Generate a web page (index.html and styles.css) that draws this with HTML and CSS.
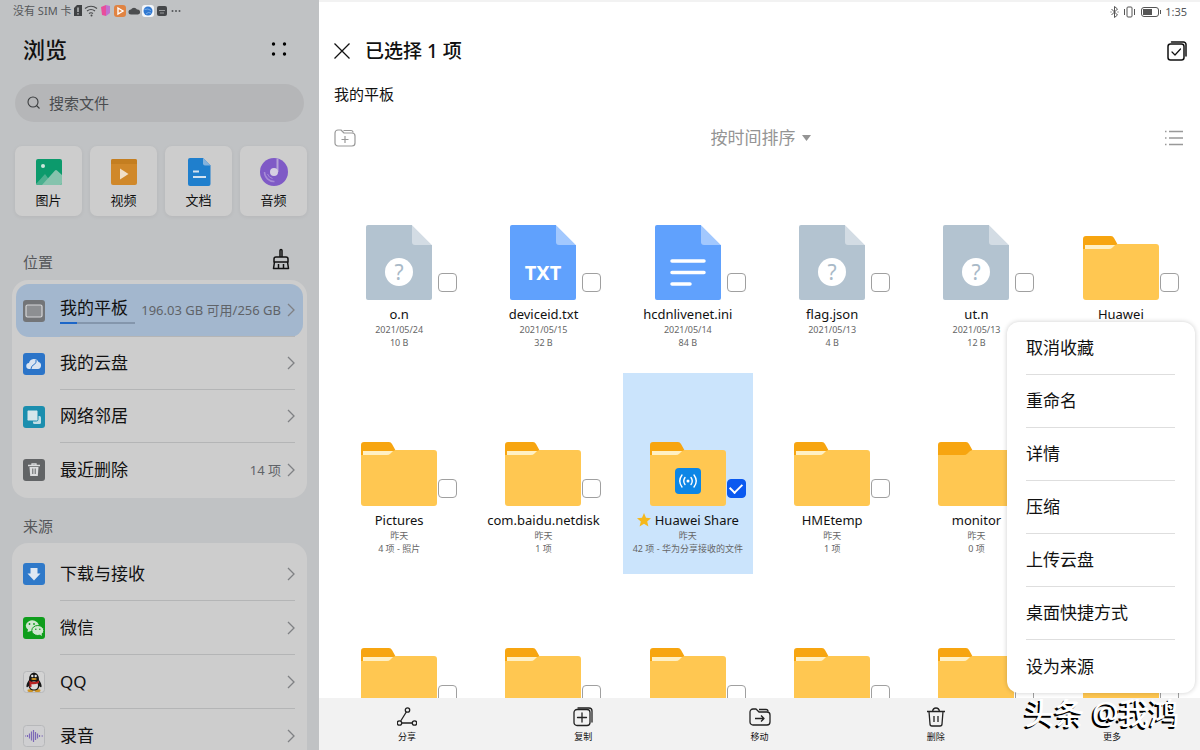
FILE: index.html
```html
<!DOCTYPE html>
<html lang="zh-CN">
<head>
  <meta charset="UTF-8">
  <meta name="viewport" content="width=device-width, initial-scale=1.0">
  <title>文件管理</title>
  <link rel="stylesheet" href="styles.css">
</head>
<body>

<!-- shared icons -->
<svg class="defs" width="0" height="0" aria-hidden="true">
  <symbol id="chevron" viewBox="0 0 8 14">
    <path d="M1 1l6 6-6 6" fill="none" stroke="#7f8184" stroke-width="1.3"/>
  </symbol>
  <symbol id="doc" viewBox="0 0 66 75">
    <path d="M2 0H46L66 20V73a2 2 0 0 1-2 2H2a2 2 0 0 1-2-2V2a2 2 0 0 1 2-2z" fill="currentColor"/>
    <path d="M46 0L66 20H49a3 3 0 0 1-3-3z" fill="#fff" fill-opacity=".42"/>
    <path d="M46 0H66V20z" fill="#fff"/>
  </symbol>
  <symbol id="folder" viewBox="0 0 76 64">
    <path d="M0 3a3 3 0 0 1 3-3H28q2 0 3 2l5 9v8H0z" fill="#f7a510"/>
    <path d="M2 9H34V16H2z" fill="#fff0c4"/>
    <path d="M0 13H26q2 0 3.500-1.500l2-2Q33 8 35 8H73a3 3 0 0 1 3 3V61a3 3 0 0 1-3 3H3a3 3 0 0 1-3-3z" fill="#ffc751"/>
  </symbol>
  <symbol id="folder-empty" viewBox="0 0 76 64">
    <path d="M0 3a3 3 0 0 1 3-3H28q2 0 3 2l5 9v8H0z" fill="#f7a510"/>
    <path d="M0 13H26q2 0 3.500-1.500l2-2Q33 8 35 8H73a3 3 0 0 1 3 3V61a3 3 0 0 1-3 3H3a3 3 0 0 1-3-3z" fill="#ffc751"/>
  </symbol>
</svg>

<div class="app">
  <aside class="sidebar">
    <div class="status">
      <span>没有 SIM 卡</span>
      <svg width="109" height="14" viewBox="0 0 109 14">
        <path d="M1 4L4 1H9V12H1z" fill="#3f4143"/>
        <path d="M5 3.500V8M5 9.300V10.600" stroke="#c0c2c4" stroke-width="1.400"/>
        <g fill="none" stroke="#494b4d" stroke-width="1.200">
          <path d="M12 4.500Q18 0 24 4.500M14 7Q18 4 22 7M16 9.500Q18 8 20 9.500"/>
        </g>
        <circle cx="18.500" cy="11.500" r="1" fill="#494b4d"/>
        <path d="M28 3L33 1V12L29 11z" fill="#e84d9c"/>
        <path d="M33 1L37 2V9L33 12z" fill="#c070d0"/>
        <rect x="41" y="1" width="12" height="12" rx="3" fill="#e08342"/>
        <path d="M45 4L50 7L45 10z" fill="none" stroke="#fff" stroke-width="1.400"/>
        <path d="M58 10.500a2.500 2.500 0 0 1 0-5 3.500 3.500 0 0 1 6 0 2.500 2.500 0 0 1 1 5z" fill="#4b4d4f"/>
        <rect x="69" y="1" width="12" height="12" rx="3" fill="#f3f6fa"/>
        <circle cx="75" cy="7" r="4.500" fill="#2f78d2"/>
        <path d="M71.500 5.500Q75 4 78 6.500M73 10Q75 7.500 78 9" fill="none" stroke="#8cb9ea" stroke-width=".8"/>
        <rect x="84" y="2" width="10" height="10" rx="2" fill="#45474a"/>
        <path d="M86 6.500H92M87 9H91" stroke="#9a9c9e"/>
        <g fill="#55575a">
          <circle cx="99.500" cy="7" r="1"/><circle cx="103" cy="7" r="1"/><circle cx="106.500" cy="7" r="1"/>
        </g>
      </svg>
    </div>

    <header class="side-head">
      <h1>浏览</h1>
      <button class="icon-btn" aria-label="更多">
        <svg width="16" height="16" viewBox="0 0 16 16">
          <circle cx="2.500" cy="3" r="1.700"/><circle cx="13.500" cy="3" r="1.700"/>
          <circle cx="2.500" cy="13" r="1.700"/><circle cx="13.500" cy="13" r="1.700"/>
        </svg>
      </button>
    </header>

    <label class="search">
      <svg width="14" height="14" viewBox="0 0 14 14" fill="none" stroke="#3c3e40" stroke-width="1.100">
        <circle cx="6" cy="6" r="5"/><path d="M9.500 9.500L12.500 12.500"/>
      </svg>
      <input type="search" placeholder="搜索文件" aria-label="搜索文件">
    </label>

    <nav class="tiles">
      <a class="tile" href="#">
        <svg width="28" height="28" viewBox="0 0 28 28">
          <rect x="1" y="1" width="26" height="26" rx="2" fill="#0c9a6c"/>
          <circle cx="8" cy="8" r="2" fill="#cfe5dc"/>
          <path d="M1 26L10 16L18 27H3a2 2 0 0 1-2-1z" fill="#4cb08f"/>
          <path d="M7 27L20 12.500Q21 11.500 22 12.500L27 17V25a2 2 0 0 1-2 2z" fill="#86c3ad"/>
        </svg>
        图片
      </a>
      <a class="tile" href="#">
        <svg width="28" height="28" viewBox="0 0 28 28">
          <rect x="1" y="1" width="26" height="26" rx="2" fill="#d0882a"/>
          <path d="M1 3a2 2 0 0 1 2-2H25a2 2 0 0 1 2 2V6H1z" fill="#c47e20"/>
          <path d="M10 10.500L18.500 16L10 21.500z" fill="#f0dfc8"/>
        </svg>
        视频
      </a>
      <a class="tile" href="#">
        <svg width="28" height="28" viewBox="0 0 28 28">
          <path d="M5 0H18L25.500 7.500V26a2 2 0 0 1-2 2H5a2 2 0 0 1-2-2V2a2 2 0 0 1 2-2z" fill="#1f7fcd"/>
          <path d="M18 0L25.500 7.500H20a2 2 0 0 1-2-2z" fill="#84b2dc"/>
          <path d="M8 13.500H14M8 19H21" stroke="#d3e2f0" stroke-width="2"/>
        </svg>
        文档
      </a>
      <a class="tile" href="#">
        <svg width="28" height="28" viewBox="0 0 28 28">
          <circle cx="14" cy="14" r="14" fill="#7f5ac6"/>
          <path d="M17.500 0.500V14" stroke="#b5a2d8" stroke-width="2"/>
          <circle cx="14" cy="14" r="4" fill="#d6d0e2"/>
          <path d="M4.500 14a9.500 9.500 0 0 0 10 9.500" fill="none" stroke="#a68bd6" stroke-width="1.500"/>
          <path d="M7.500 16a7 7 0 0 0 5 4.500" fill="none" stroke="#a68bd6"/>
        </svg>
        音频
      </a>
    </nav>

    <div class="section-head section-head-tall">
      <h2>位置</h2>
      <button class="icon-btn" aria-label="清理">
        <svg width="18" height="22" viewBox="0 0 18 22" fill="none" stroke="#111" stroke-width="1.500" stroke-linejoin="round">
          <path d="M8 9V2.500a1 1 0 0 1 2 0V9M4 9H14a2 2 0 0 1 2 2V14H2V11a2 2 0 0 1 2-2z"/>
          <path d="M2.500 14L1.500 20.500H16.500L15.500 14M6.500 20V16M11.500 20V16"/>
        </svg>
      </button>
    </div>

    <nav class="card">
      <a class="row selected" href="#">
        <svg width="22" height="22" viewBox="0 0 22 22">
          <rect width="22" height="22" rx="3" fill="#737578"/>
          <rect x="3" y="5" width="16" height="12" rx="1.500" fill="#8d8f92" stroke="#d5d6d8" stroke-width="1.200"/>
        </svg>
        <div class="row-body">
          <div class="storage">
            我的平板
            <span class="meter"><span class="meter-used" style="width: 23%"></span></span>
          </div>
          <span class="row-info">196.03 GB 可用/256 GB</span>
          <svg class="chevron"><use href="#chevron"/></svg>
        </div>
      </a>
      <a class="row" href="#">
        <svg width="22" height="22" viewBox="0 0 22 22">
          <rect width="22" height="22" rx="3" fill="#2b74c8"/>
          <path d="M6.500 16a3 3 0 0 1-.5-6 5 5 0 0 1 9.500-1 3.600 3.600 0 0 1-.5 7z" fill="#dbe5f1"/>
          <path d="M8 16Q8 13 11 11.500T13 7" fill="none" stroke="#2b74c8" stroke-width="1"/>
        </svg>
        <div class="row-body">
          <span class="row-name">我的云盘</span>
          <svg class="chevron"><use href="#chevron"/></svg>
        </div>
      </a>
      <a class="row" href="#">
        <svg width="22" height="22" viewBox="0 0 22 22">
          <rect width="22" height="22" rx="3" fill="#1b8eae"/>
          <rect x="10" y="10" width="8" height="8" rx="1.500" fill="#c0dde5"/>
          <rect x="4" y="4" width="11" height="11" rx="1.500" fill="#d5e6eb" stroke="#1b8eae"/>
        </svg>
        <div class="row-body">
          <span class="row-name">网络邻居</span>
          <svg class="chevron"><use href="#chevron"/></svg>
        </div>
      </a>
      <a class="row" href="#">
        <svg width="22" height="22" viewBox="0 0 22 22">
          <rect width="22" height="22" rx="3" fill="#626466"/>
          <path d="M5 6.500H17M9 6V4.800H13V6" fill="none" stroke="#dcdddf" stroke-width="1.300"/>
          <path d="M6.500 8H15.500L14.800 17H7.200z" fill="#dcdddf"/>
          <path d="M9.800 9.500V15M12.200 9.500V15" stroke="#626466"/>
        </svg>
        <div class="row-body">
          <span class="row-name">最近删除</span>
          <span class="row-info">14 项</span>
          <svg class="chevron"><use href="#chevron"/></svg>
        </div>
      </a>
    </nav>

    <div class="section-head">
      <h2>来源</h2>
    </div>

    <nav class="card card-sources">
      <a class="row" href="#">
        <svg width="22" height="22" viewBox="0 0 22 22">
          <rect width="22" height="22" rx="3" fill="#2f79c9"/>
          <path d="M7.500 5H14.500V10.500H17.500L11 17.500L4.500 10.500H7.500z" fill="#dfe8f2"/>
        </svg>
        <div class="row-body">
          <span class="row-name">下载与接收</span>
          <svg class="chevron"><use href="#chevron"/></svg>
        </div>
      </a>
      <a class="row" href="#">
        <svg width="22" height="22" viewBox="0 0 22 22">
          <rect width="22" height="22" rx="3" fill="#0f9d1c"/>
          <path d="M4.500 15L5 12.500A6.500 5.200 0 1 1 9 13.800z" fill="#cfe6cf"/>
          <ellipse cx="14.800" cy="13.500" rx="6" ry="5" fill="#cfe6cf" stroke="#0f9d1c"/>
          <path d="M16.500 17.500L19 19L18.500 16.500z" fill="#cfe6cf"/>
          <g fill="#0f9d1c">
            <circle cx="6.500" cy="7" r=".9"/><circle cx="11" cy="7" r=".9"/>
            <circle cx="12.800" cy="12.300" r=".8"/><circle cx="16.800" cy="12.300" r=".8"/>
          </g>
        </svg>
        <div class="row-body">
          <span class="row-name">微信</span>
          <svg class="chevron"><use href="#chevron"/></svg>
        </div>
      </a>
      <a class="row" href="#">
        <svg width="22" height="22" viewBox="0 0 22 22">
          <rect x=".5" y=".5" width="21" height="21" rx="3" fill="#d3d3d3" stroke="#b7b8ba"/>
          <ellipse cx="7.500" cy="19.500" rx="3" ry="1.500" fill="#cf9426"/>
          <ellipse cx="14.500" cy="19.500" rx="3" ry="1.500" fill="#cf9426"/>
          <path d="M11 1.500Q16 2 16 9Q19 13 18.500 16Q17 16.500 16.500 15Q15.500 19.500 11 19.500T5.500 15Q5 16.500 3.500 16Q3 13 6 9Q6 2 11 1.500z" fill="#161616"/>
          <ellipse cx="11" cy="14.500" rx="4" ry="4" fill="#dcdcdc"/>
          <circle cx="9.300" cy="5" r="1.200" fill="#e4e4e4"/><circle cx="12.700" cy="5" r="1.200" fill="#e4e4e4"/>
          <ellipse cx="11" cy="8" rx="2.800" ry="1" fill="#d79a22"/>
          <path d="M6 9.500Q11 12.500 16 9.500V12Q11 14 8.500 13V16H6.500V12z" fill="#b92323"/>
        </svg>
        <div class="row-body">
          <span class="row-name">QQ</span>
          <svg class="chevron"><use href="#chevron"/></svg>
        </div>
      </a>
      <a class="row" href="#">
        <svg width="22" height="22" viewBox="0 0 22 22">
          <rect x=".5" y=".5" width="21" height="21" rx="3" fill="#cfcfd1" stroke="#b7b8ba"/>
          <path d="M2 11H3M4.500 10V12M6.500 8.500V13.500M8.500 6.500V15.500M10.500 5V17M12.500 7V15M14.500 8.500V13.500M16.500 10V12M18.500 11H20" stroke="#7d69b8" stroke-width="1.200"/>
        </svg>
        <div class="row-body">
          <span class="row-name">录音</span>
          <svg class="chevron"><use href="#chevron"/></svg>
        </div>
      </a>
    </nav>
  </aside>

  <main class="main">
    <div class="status status-right">
      <svg width="52" height="14" viewBox="0 0 52 14" fill="none" stroke="#555" stroke-width="1">
        <path d="M2.500 4L8.500 10L5.500 12.500V1.500L8.500 4L2.500 10M1.500 7H2.500M8.500 7H9.500"/>
        <rect x="18" y="2" width="5" height="10" rx="1"/>
        <path d="M15.500 4V10M25.500 4V10"/>
        <rect x="32.500" y="2.500" width="17" height="9" rx="2.500"/>
        <rect x="34" y="4" width="9" height="6" fill="#555" stroke="none"/>
        <path d="M51.500 5V9"/>
      </svg>
      <span>1:35</span>
    </div>

    <header class="main-head">
      <button class="icon-btn" aria-label="取消">
        <svg width="16" height="16" viewBox="0 0 16 16" fill="none" stroke="#111" stroke-width="1.300">
          <path d="M.5 .5L15.500 15.500M15.500 .5L.5 15.500"/>
        </svg>
      </button>
      <h2>已选择 1 项</h2>
      <button class="icon-btn" aria-label="全选">
        <svg width="20" height="20" viewBox="0 0 20 20" fill="none" stroke="#111" stroke-width="1.500" stroke-linecap="round" stroke-linejoin="round">
          <rect x="1" y="3" width="16" height="16" rx="2.500"/>
          <path d="M4.500 1H16.500a2.500 2.500 0 0 1 2.500 2.500V15"/>
          <path d="M5 11L8 14L13.500 8" stroke-width="1.200"/>
        </svg>
      </button>
    </header>

    <p class="path">我的平板</p>

    <div class="tools">
      <button class="icon-btn" aria-label="新建文件夹">
        <svg width="22" height="18" viewBox="0 0 22 18" fill="none" stroke="#999" stroke-width="1.200" stroke-linejoin="round">
          <path d="M1 4a3 3 0 0 1 3-3H7L10 4H18a3 3 0 0 1 3 3V14a3 3 0 0 1-3 3H4a3 3 0 0 1-3-3z"/>
          <path d="M9.500 1.500H17a2 2 0 0 1 2 2M7.500 10.500H14.500M11 7V14"/>
        </svg>
      </button>
      <div class="sort">
        <select aria-label="排序方式">
          <option>按时间排序</option>
        </select>
        <svg width="9" height="6" viewBox="0 0 9 6"><path d="M0 0H9L4.500 6z" fill="#949494"/></svg>
      </div>
      <button class="icon-btn" aria-label="列表视图">
        <svg width="19" height="16" viewBox="0 0 19 16" stroke="#999" stroke-width="1.300">
          <path d="M4 1.500H18M4 8H18M4 14.500H18M0 1.500H1.500M0 8H1.500M0 14.500H1.500"/>
        </svg>
      </button>
    </div>

    <div class="files" id="files"></div>

    <footer class="toolbar">
      <button>
        <svg width="20" height="20" viewBox="0 0 20 20" fill="none" stroke="#222" stroke-width="1.300">
          <circle cx="10.500" cy="3" r="2.200"/><circle cx="2.500" cy="16" r="2.200"/><circle cx="17.500" cy="16" r="2.200"/>
          <path d="M9.300 5L3.700 14M4.700 16H15.300"/>
        </svg>
        分享
      </button>
      <button>
        <svg width="20" height="20" viewBox="0 0 20 20" fill="none" stroke="#222" stroke-width="1.300" stroke-linecap="round">
          <rect x="1" y="2.500" width="16" height="16" rx="3"/>
          <path d="M5 1H16a3 3 0 0 1 3 3V15M4.500 10.500H13.500M9 6V15"/>
        </svg>
        复制
      </button>
      <button>
        <svg width="22" height="20" viewBox="0 0 22 20" fill="none" stroke="#222" stroke-width="1.300" stroke-linejoin="round">
          <path d="M1 5a3 3 0 0 1 3-3H7L10 5H18a3 3 0 0 1 3 3V15a3 3 0 0 1-3 3H4a3 3 0 0 1-3-3z"/>
          <path d="M10 2.500H17a2 2 0 0 1 2 2M6 11.500H15M12 8.500L15 11.500L12 14.500"/>
        </svg>
        移动
      </button>
      <button>
        <svg width="20" height="20" viewBox="0 0 20 20" fill="none" stroke="#222" stroke-width="1.300" stroke-linejoin="round">
          <path d="M1 4.500H19M6.500 4.500Q7 1 10 1T13.500 4.500M3 4.500L4 17a2 2 0 0 0 2 2H14a2 2 0 0 0 2-2L17 4.500M8 9V15M12 9V15"/>
        </svg>
        删除
      </button>
      <button>
        <svg width="20" height="20" viewBox="0 0 20 20">
          <circle cx="5" cy="5" r="1.500"/><circle cx="15" cy="5" r="1.500"/>
          <circle cx="5" cy="15" r="1.500"/><circle cx="15" cy="15" r="1.500"/>
        </svg>
        更多
      </button>
    </footer>

    <div class="menu">
      <button>取消收藏</button>
      <button>重命名</button>
      <button>详情</button>
      <button>压缩</button>
      <button>上传云盘</button>
      <button>桌面快捷方式</button>
      <button>设为来源</button>
    </div>

    <div class="watermark">头条 @我鸿</div>
  </main>
</div>

<script>
  const files = [
    { name: 'o.n', icon: 'unknown', date: '2021/05/24', size: '10 B' },
    { name: 'deviceid.txt', icon: 'txt', date: '2021/05/15', size: '32 B' },
    { name: 'hcdnlivenet.ini', icon: 'text', date: '2021/05/14', size: '84 B' },
    { name: 'flag.json', icon: 'unknown', date: '2021/05/13', size: '4 B' },
    { name: 'ut.n', icon: 'unknown', date: '2021/05/13', size: '12 B' },
    { name: 'Huawei', icon: 'folder' },
    { name: 'Pictures', icon: 'folder', date: '昨天', size: '4 项 - 照片' },
    { name: 'com.baidu.netdisk', icon: 'folder', date: '昨天', size: '1 项' },
    { name: 'Huawei Share', icon: 'share', date: '昨天', size: '42 项 - 华为分享接收的文件', checked: true },
    { name: 'HMEtemp', icon: 'folder', date: '昨天', size: '1 项' },
    { name: 'monitor', icon: 'empty', date: '昨天', size: '0 项' },
    { icon: 'folder' },
    { icon: 'folder' },
    { icon: 'folder' },
    { icon: 'folder' },
    { icon: 'folder' },
    { icon: 'folder' },
    { icon: 'folder' }
  ];

  const icons = {
    unknown: `
      <svg class="doc doc-gray" viewBox="0 0 66 75">
        <use href="#doc"/>
        <circle cx="33" cy="47" r="14" fill="#fff"/>
        <text class="doc-mark" x="33" y="55" text-anchor="middle">?</text>
      </svg>`,
    txt: `
      <svg class="doc doc-blue" viewBox="0 0 66 75">
        <use href="#doc"/>
        <text class="doc-txt" x="33" y="55" text-anchor="middle">TXT</text>
      </svg>`,
    text: `
      <svg class="doc doc-blue" viewBox="0 0 66 75">
        <use href="#doc"/>
        <path d="M17 36H49M17 47.500H49M17 59H35" stroke="#fff" stroke-width="3.500" stroke-linecap="round"/>
      </svg>`,
    folder: '<svg class="folder"><use href="#folder"/></svg>',
    empty: '<svg class="folder"><use href="#folder-empty"/></svg>',
    share: `
      <svg class="folder" viewBox="0 0 76 64">
        <use href="#folder"/>
        <rect x="25" y="26" width="26" height="26" rx="4" fill="#0c86e6"/>
        <circle cx="38" cy="39" r="1.500" fill="#fff"/>
        <path d="M35 35.500Q32.500 39 35 42.500M41 35.500Q43.500 39 41 42.500M32 33Q27.500 39 32 45M44 33Q48.500 39 44 45" fill="none" stroke="#fff" stroke-width="1.400" stroke-linecap="round"/>
      </svg>`
  };

  const star = '<svg class="star" viewBox="0 0 14 14"><path d="M7 0L9 4.800L14 5.200L10.200 8.500L11.400 13.500L7 10.800L2.600 13.500L3.800 8.500L0 5.200L5 4.800z" fill="#f5b81c"/></svg>';

  document.getElementById('files').innerHTML = files.map((file, i) => `
    <div class="file ${file.checked ? 'file-selected' : ''}">
      <div class="file-icon">
        ${icons[file.icon]}
        <input type="checkbox" id="file${i}" aria-label="${file.name || '文件夹'}" ${file.checked ? 'checked' : ''}>
      </div>
      <label class="file-name" for="file${i}">${file.checked ? star : ''}${file.name || ''}</label>
      <span class="file-meta">${file.date || ''}</span>
      <span class="file-meta">${file.size || ''}</span>
    </div>
  `).join('');
</script>

</body>
</html>
```

FILE: styles.css
```css
* {
  box-sizing: border-box;
}

body {
  margin: 0;
  font-family: "Noto Sans", "Noto Sans CJK SC", sans-serif;
  color: #111;
  background-color: #fff;
}

h1, h2, p {
  margin: 0;
}

a {
  color: inherit;
  text-decoration: none;
}

button, input, select {
  font: inherit;
  color: inherit;
  border: none;
  background: none;
  padding: 0;
  margin: 0;
}

svg {
  display: block;
  flex-shrink: 0;
}

.defs {
  position: absolute;
}

.icon-btn {
  cursor: pointer;
}

.app {
  display: flex;
  height: 100vh;
  overflow: hidden;
}

.status {
  display: flex;
  align-items: center;
  gap: 2px;
  height: 22px;
  padding-left: 1px;
  font-size: 11px;
  line-height: 22px;
  color: #55575a;
}

/* sidebar */

.sidebar {
  width: 319px;
  flex-shrink: 0;
  padding: 0 12px;
  background-color: #c0c2c4;
  overflow: hidden;
}

.side-head {
  display: flex;
  justify-content: space-between;
  align-items: center;
  height: 54px;
  padding: 0 20px 0 11px;
}

.side-head h1 {
  font-size: 22px;
  font-weight: 500;
  line-height: 30px;
}

.search {
  display: flex;
  align-items: center;
  gap: 8px;
  height: 38px;
  margin: 8px 3px 24px;
  padding: 0 12px;
  border-radius: 19px;
  background-color: #b5b6b8;
}

.search input {
  flex: 1;
  min-width: 0;
  font-size: 15px;
  line-height: 22px;
  outline: none;
}

.search input::placeholder {
  color: #4a4c4f;
  opacity: 1;
}

.tiles {
  display: grid;
  grid-template-columns: repeat(4, 1fr);
  gap: 8px;
  padding-left: 3px;
}

.tile {
  display: flex;
  flex-direction: column;
  align-items: center;
  gap: 4px;
  height: 70px;
  padding-top: 12px;
  border-radius: 7px;
  background-color: #cdcdcd;
  box-shadow: 0 1px 4px rgba(0, 0, 0, 0.06);
  font-size: 13px;
  line-height: 20px;
}

.section-head {
  display: flex;
  justify-content: space-between;
  align-items: flex-end;
  height: 45px;
  padding: 0 17px 6px 11px;
}

.section-head-tall {
  height: 64px;
  padding-bottom: 10px;
}

.section-head h2 {
  font-size: 15px;
  font-weight: 400;
  line-height: 22px;
  color: #55575a;
}

.section-head-tall h2 {
  line-height: 16px;
}

.card {
  padding: 4px 4px 2px;
  border-radius: 16px;
  background-color: #cdcdcd;
}

.row {
  display: flex;
  align-items: center;
  gap: 15px;
  height: 53px;
  padding: 0 8px 0 7px;
  font-size: 17px;
  line-height: 24px;
}

.card-sources .row {
  height: 54px;
}

.row-body {
  flex: 1;
  display: flex;
  align-items: center;
  gap: 6px;
  height: 100%;
  border-bottom: 1px solid #b4b5b6;
}

.row:last-child .row-body {
  border-bottom: none;
}

.row-name {
  flex: 1;
}

.row-info {
  margin-left: auto;
  font-size: 13px;
  color: #5f6368;
  white-space: nowrap;
}

.chevron {
  width: 8px;
  height: 14px;
}

.selected {
  border-radius: 13px;
  background-color: #a3b7ce;
}

.storage {
  width: 75px;
  white-space: nowrap;
}

.meter {
  display: block;
  height: 2px;
  margin-top: 2px;
  background-color: #8496ac;
}

.meter-used {
  display: block;
  height: 2px;
  background-color: #1c66c8;
}

/* main area */

.main {
  position: relative;
  flex: 1;
  min-width: 0;
  display: flex;
  flex-direction: column;
  border-top: 2px solid #f2f2f2;
}

.status-right {
  justify-content: flex-end;
  gap: 4px;
  height: 20px;
  padding-right: 13px;
}

.main-head {
  display: flex;
  align-items: center;
  gap: 15px;
  height: 58px;
  padding: 0 13px 0 15px;
}

.main-head h2 {
  flex: 1;
  font-size: 19px;
  font-weight: 500;
  line-height: 26px;
}

.path {
  padding: 3px 15px;
  font-size: 15px;
  line-height: 22px;
}

.tools {
  display: flex;
  justify-content: space-between;
  align-items: center;
  height: 59px;
  padding: 0 16px 0 15px;
}

.sort {
  display: flex;
  align-items: center;
  gap: 6px;
  color: #949494;
}

.sort select {
  appearance: none;
  font-size: 17px;
  line-height: 24px;
}

.files {
  flex: 1;
  min-height: 0;
  display: grid;
  grid-template-columns: repeat(6, 1fr);
  grid-auto-rows: 201px;
  gap: 5px 14px;
  padding: 0 14px 0 15px;
  overflow: hidden;
}

.file {
  min-width: 0;
  display: flex;
  flex-direction: column;
  align-items: center;
}

.file-selected {
  background-color: #cbe4fc;
}

.file-icon {
  display: grid;
  grid-template-columns: 1fr 76px 1fr;
  align-items: end;
  width: 100%;
  height: 133px;
  margin-bottom: 5px;
}

.file-icon svg {
  grid-column: 2;
  justify-self: center;
}

.doc {
  width: 66px;
  height: 75px;
}

.doc-gray {
  color: #b3c3d0;
}

.doc-blue {
  color: #60a1fd;
}

.doc-mark {
  font-size: 21px;
  fill: #a9bac8;
}

.doc-txt {
  font-size: 20px;
  font-weight: 700;
  fill: #fff;
}

.folder {
  width: 76px;
  height: 64px;
}

.file-icon input {
  appearance: none;
  display: grid;
  place-items: center;
  width: 19px;
  height: 19px;
  margin: 0 0 8px 1px;
  border: 1px solid #a0a0a0;
  border-radius: 4px;
  background-color: #fff;
}

.file-icon input:checked {
  border-color: #0a59f0;
  background-color: #0a59f0;
}

.file-icon input:checked::after {
  content: "";
  width: 10px;
  height: 6px;
  margin-bottom: 3px;
  border-left: 2px solid #fff;
  border-bottom: 2px solid #fff;
  transform: rotate(-45deg);
}

.file-name {
  display: flex;
  align-items: center;
  gap: 4px;
  height: 18px;
  font-size: 13px;
  line-height: 18px;
  white-space: nowrap;
}

.star {
  width: 14px;
  height: 14px;
}

.file-meta {
  height: 13px;
  font-size: 9px;
  line-height: 13px;
  color: #666;
  white-space: nowrap;
}

.toolbar {
  display: flex;
  height: 52px;
  flex-shrink: 0;
  background-color: #f2f2f2;
}

.toolbar button {
  flex: 1;
  display: flex;
  flex-direction: column;
  align-items: center;
  gap: 3px;
  padding-top: 9px;
  font-size: 9px;
  line-height: 13px;
}

.menu {
  position: absolute;
  right: 5px;
  bottom: 57px;
  width: 188px;
  padding: 0 20px 0 19px;
  border-radius: 12px;
  background-color: #fff;
  box-shadow: 0 0 5px rgba(0, 0, 0, 0.2);
}

.menu button {
  display: block;
  width: 100%;
  height: 53px;
  border-bottom: 1px solid #dedede;
  font-size: 17px;
  line-height: 24px;
  text-align: left;
}

.menu button:last-child {
  border-bottom: none;
}

.watermark {
  position: absolute;
  right: 21px;
  bottom: 17px;
  font-size: 30px;
  font-weight: 500;
  line-height: 40px;
  color: #fff;
  text-shadow: -2px 2px 0 #000;
  white-space: nowrap;
  pointer-events: none;
}
```
